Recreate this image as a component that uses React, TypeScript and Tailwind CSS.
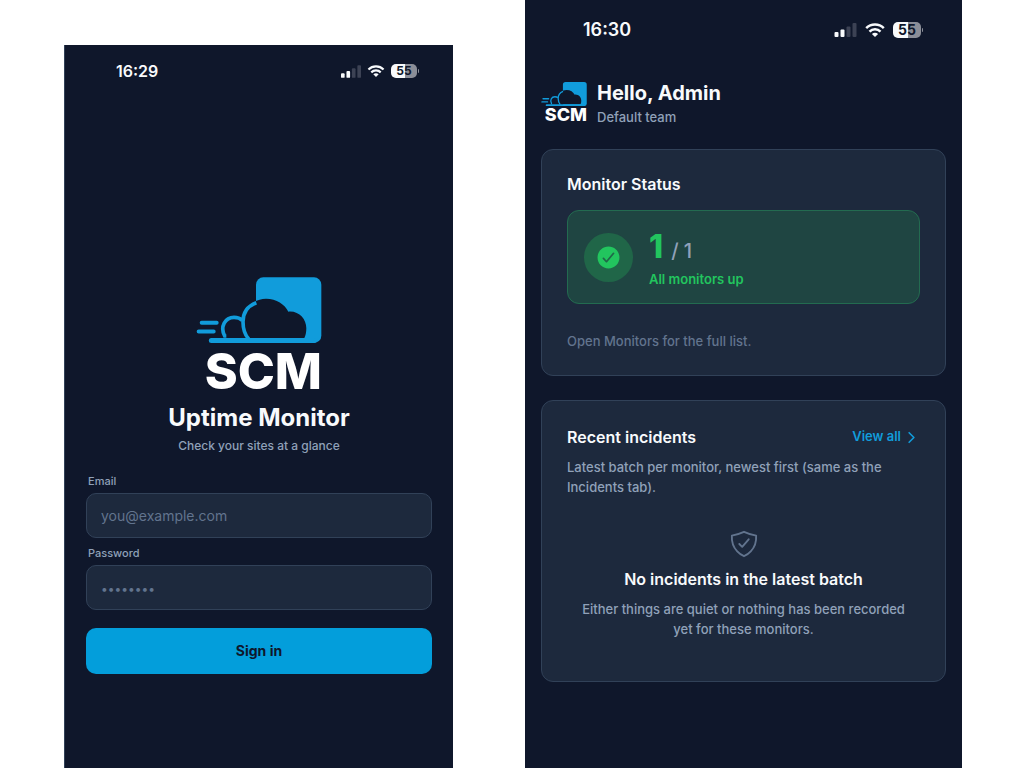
import { ReactNode } from 'react';
import { IoCheckmarkCircle, IoChevronForward, IoShieldCheckmarkOutline } from 'react-icons/io5';

interface StatusBarProps {
  time: string;
  large?: boolean;
}

const StatusBar = ({ time, large = false }: StatusBarProps) => {
  return (
    <div className={`flex items-center justify-between ${large ? 'h-[60px] pl-[58px] pr-[39px]' : 'h-[52px] pl-[51px] pr-[34px]'}`}>
      <span className={`font-semibold text-slate-50 ${large ? 'text-lg' : 'text-base'}`}>{time}</span>
      <div className={`flex items-center ${large ? 'gap-2' : 'gap-[6px]'}`}>
        <svg viewBox="0 0 22 14" className={large ? 'h-[14px] w-[23px]' : 'h-[13px] w-5'} aria-hidden="true">
          <rect x="0" y="9" width="4" height="5" rx="1" fill="#f8fafc" />
          <rect x="6" y="6.5" width="4" height="7.5" rx="1" fill="#f8fafc" />
          <rect x="12" y="3.5" width="4" height="10.5" rx="1" fill="#3c4254" />
          <rect x="18" y="0" width="4" height="14" rx="1" fill="#3c4254" />
        </svg>
        <svg viewBox="0 0 20 14" className={large ? 'h-[14px] w-5' : 'h-3 w-[18px]'} fill="none" stroke="#f8fafc" strokeWidth="2.5" aria-hidden="true">
          <path d="M1.2 5.2C6 0.4 14 0.4 18.8 5.2" />
          <path d="M4.5 8.6c3-3 8-3 11 0" />
          <path d="M10 14 6.900 10.900c1.700-1.700 4.500-1.700 6.200 0z" fill="#f8fafc" stroke="none" />
        </svg>
        <div className="flex items-center gap-px">
          <span className={`flex items-center justify-center bg-linear-to-r from-slate-50 from-55% to-[#8b8e98] to-55% font-bold text-slate-900 ${large ? 'h-4 w-7 rounded-[5px] text-sm' : 'h-[14px] w-[26px] rounded-[5px] text-xs'}`}>55</span>
          <span className="h-1 w-px rounded-r bg-[#8b8e98]"></span>
        </div>
      </div>
    </div>
  );
};

interface LogoProps {
  small?: boolean;
}

const Logo = ({ small = false }: LogoProps) => {
  return (
    <div className={`flex flex-col items-end ${small ? 'w-[46px]' : 'w-[126px]'}`}>
      <svg viewBox="46 36 378 199" className="w-full" fill="none" stroke="#119cdb" aria-hidden="true">
        <rect x="226" y="37" width="196" height="197" rx="22" fill="#119cdb" stroke="none" />
        <path d="M208 219C197 206 192 190 192 168C192 128 220 101 256 101C288 101 312 118 323 140C355 137 377 162 377 190C377 202 375 212 371 219Z" fill="#0f172a" stroke="none" />
        <path d="M227 113C201 123 187 144 187 170C187 192 192 208 204 222" strokeWidth="11" />
        <path d="M137 213H132C117 184 134 157 160 157C171 157 179 160 185 166" strokeWidth="11" />
        <path d="M92 226.500H400" strokeWidth="15" strokeLinecap="round" />
        <path d="M63 173.500H108M54 199.500H99" strokeWidth="12" strokeLinecap="round" />
      </svg>
      <span className={`font-extrabold text-white ${small ? 'text-lg leading-[18px]' : 'text-[50px] leading-[56px]'}`}>SCM</span>
    </div>
  );
};

interface FieldProps {
  id: string;
  label: string;
  type: string;
  placeholder: string;
}

const Field = ({ id, label, type, placeholder }: FieldProps) => {
  return (
    <div>
      <label htmlFor={id} className="block px-0.5 text-[11px] leading-4 font-medium text-slate-400">{label}</label>
      <input
        id={id}
        type={type}
        placeholder={placeholder}
        className={`mt-1 h-[45px] w-full rounded-[10px] border border-slate-700 bg-slate-800 px-[14px] text-sm text-slate-50 placeholder:text-slate-500 ${type === 'password' ? 'placeholder:text-xs' : ''}`}
      />
    </div>
  );
};

const LoginScreen = () => {
  return (
    <section className="mt-[45px] border-l border-slate-700 bg-slate-900">
      <StatusBar time="16:29" />
      <div className="flex flex-col items-center px-[21px] pt-[180px] pb-12">
        <Logo />
        <h1 className="mt-[3px] text-2xl leading-8 font-bold text-slate-50">Uptime Monitor</h1>
        <p className="mt-1 text-xs leading-4 font-medium text-slate-400">Check your sites at a glance</p>
        <form className="mt-[19px] flex w-full flex-col gap-[7px]" onSubmit={(e) => e.preventDefault()}>
          <Field id="email" label="Email" type="email" placeholder="you@example.com" />
          <Field id="password" label="Password" type="password" placeholder="••••••••" />
          <button type="submit" className="mt-[11px] h-[46px] rounded-[10px] bg-[#039edb] text-sm font-bold text-slate-900">Sign in</button>
        </form>
      </div>
    </section>
  );
};

const Card = ({ children }: { children: ReactNode }) => {
  return <div className="rounded-xl border border-slate-700 bg-slate-800 px-[25px] py-6">{children}</div>;
};

const HomeScreen = () => {
  return (
    <section className="bg-slate-900">
      <StatusBar time="16:30" large />
      <div className="flex flex-col gap-6 px-4 pt-[21px] pb-8">
        <header className="flex items-center gap-[10px]">
          <Logo small />
          <div>
            <h2 className="text-xl leading-6 font-bold text-slate-50">Hello, Admin</h2>
            <p className="mt-1 text-[13px] leading-4 font-medium text-slate-400">Default team</p>
          </div>
        </header>

        <Card>
          <h3 className="text-base leading-5 font-semibold text-slate-50">Monitor Status</h3>
          <div className="mt-4 flex items-center gap-4 rounded-xl border border-[#236b50] bg-[#1f4542] px-4 py-[14px]">
            <div className="flex size-[49px] items-center justify-center rounded-full bg-[#206648] text-[#22c55e]">
              <IoCheckmarkCircle className="size-[27px]" />
            </div>
            <div>
              <p className="flex items-baseline gap-2 text-slate-400">
                <span className="text-[32px] leading-[44px] font-extrabold text-[#22c55e]">1</span>
                <span className="text-xl leading-6 font-medium">/ 1</span>
              </p>
              <p className="text-[13px] leading-5 font-semibold text-[#22c55e]">All monitors up</p>
            </div>
          </div>
          <p className="mt-[27px] text-[13px] leading-5 font-medium text-slate-500">Open Monitors for the full list.</p>
        </Card>

        <Card>
          <div className="flex items-center justify-between">
            <h3 className="text-base leading-6 font-semibold text-slate-50">Recent incidents</h3>
            <a href="#incidents" className="flex items-center gap-[2px] text-[13px] font-semibold text-[#119cdb]">
              View all
              <IoChevronForward className="size-[17px]" />
            </a>
          </div>
          <p className="mt-2 text-[13px] leading-5 font-medium text-slate-400">Latest batch per monitor, newest first (same as the Incidents tab).</p>
          <div className="flex flex-col items-center px-[10px] pt-8 pb-[18px] text-center">
            <IoShieldCheckmarkOutline className="size-[30px] text-slate-500" />
            <p className="mt-2 text-base leading-6 font-semibold text-slate-50">No incidents in the latest batch</p>
            <p className="mt-2 text-[13px] leading-5 font-medium text-slate-400">Either things are quiet or nothing has been recorded yet for these monitors.</p>
          </div>
        </Card>
      </div>
    </section>
  );
};

const App = () => {
  return (
    <main className="grid min-h-screen grid-cols-[389fr_437fr] gap-[72px] bg-white pr-[62px] pl-16 font-['Inter',sans-serif]">
      <LoginScreen />
      <HomeScreen />
    </main>
  );
};

export default App;
